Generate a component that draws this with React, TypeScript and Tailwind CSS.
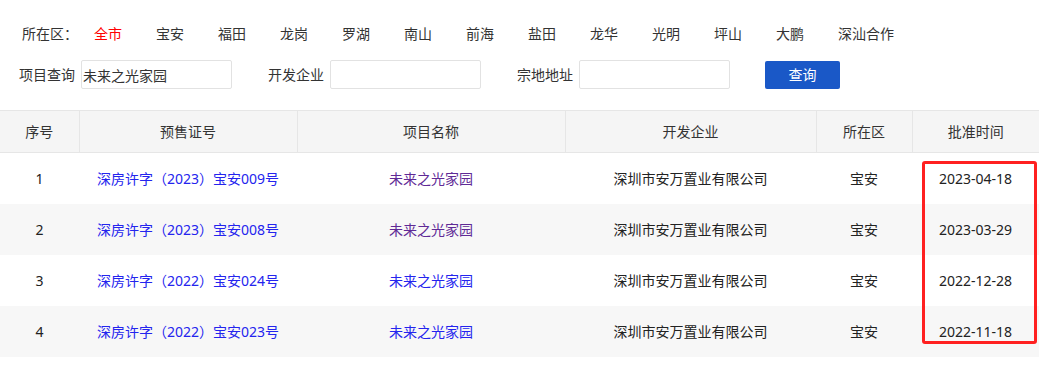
const districts = ["全市", "宝安", "福田", "龙岗", "罗湖", "南山", "前海", "盐田", "龙华", "光明", "坪山", "大鹏", "深汕合作"];

const rows = [
  { no: 1, cert: "深房许字（2023）宝安009号", name: "未来之光家园", visited: true, date: "2023-04-18" },
  { no: 2, cert: "深房许字（2023）宝安008号", name: "未来之光家园", visited: true, date: "2023-03-29" },
  { no: 3, cert: "深房许字（2022）宝安024号", name: "未来之光家园", visited: false, date: "2022-12-28" },
  { no: 4, cert: "深房许字（2022）宝安023号", name: "未来之光家园", visited: false, date: "2022-11-18" },
];

function Field({ label, value, className }: { label: string; value?: string; className?: string }) {
  return (
    <div className={`flex items-center ${className ?? ""}`}>
      <span className="w-[56px] whitespace-nowrap text-[14px] text-[#333]">{label}</span>
      <input
        readOnly
        value={value ?? ""}
        className="ml-[6px] h-[29px] w-[151px] rounded-[2px] border border-[#e2e2e2] bg-white px-[1px] text-[14px] text-[#333] outline-none"
      />
    </div>
  );
}

export default function App() {
  return (
    <div
      className="h-[366px] w-[1060px] overflow-hidden bg-white"
      style={{ fontFamily: '"Noto Sans", "Noto Sans CJK SC", sans-serif' }}
    >
      <div className="flex h-[28px] items-center pl-[22px] pt-0 mt-[20px] text-[14px] leading-[28px] text-[#333]">
        <span className="mr-[16px] w-[56px] whitespace-nowrap">所在区：</span>
        {districts.map((d, i) => (
          <span
            key={d}
            className={`mr-[34px] whitespace-nowrap ${i === 0 ? "text-[#ff0000]" : "text-[#333]"}`}
          >
            {d}
          </span>
        ))}
      </div>

      <div className="mt-[12px] flex h-[29px] items-center pl-[19px]">
        <Field label="项目查询" value="未来之光家园" />
        <Field label="开发企业" className="ml-[36px]" />
        <Field label="宗地地址" className="ml-[36px]" />
        <button className="ml-[35px] h-[28px] w-[75px] rounded-[2px] bg-[#1a58c7] text-[14px] text-white">
          查询
        </button>
      </div>

      <div className="relative mt-[21px] w-[1039px]">
        <table className="w-[1039px] table-fixed border-collapse text-[14px]">
          <colgroup>
            <col className="w-[79px]" />
            <col className="w-[218px]" />
            <col className="w-[268px]" />
            <col className="w-[251px]" />
            <col className="w-[96px]" />
            <col className="w-[127px]" />
          </colgroup>
          <thead>
            <tr className="h-[42px] border-y border-[#e6e6e6] bg-[#f5f5f5] text-[#333]">
              {["序号", "预售证号", "项目名称", "开发企业", "所在区", "批准时间"].map((h, i) => (
                <th
                  key={h}
                  className={`p-0 text-center font-normal ${i > 0 ? "border-l border-[#e6e6e6]" : ""}`}
                >
                  {h}
                </th>
              ))}
            </tr>
          </thead>
          <tbody>
            {rows.map((r) => (
              <tr key={r.no} className={`h-[51px] ${r.no % 2 === 0 ? "bg-[#f7f7f7]" : "bg-white"}`}>
                <td className="p-0 text-center text-[#222]">{r.no}</td>
                <td className="p-0 text-center text-[#2424ee]">{r.cert}</td>
                <td className={`p-0 text-center ${r.visited ? "text-[#5f2a96]" : "text-[#2424ee]"}`}>
                  {r.name}
                </td>
                <td className="p-0 text-center text-[#222]">深圳市安万置业有限公司</td>
                <td className="p-0 text-center text-[#222]">宝安</td>
                <td className="p-0 text-center text-[#222]">{r.date}</td>
              </tr>
            ))}
          </tbody>
        </table>
        <div className="pointer-events-none absolute left-[922px] top-[51px] h-[183px] w-[115px] rounded-[3px] border-[3px] border-[#ff2020]" />
      </div>
    </div>
  );
}
